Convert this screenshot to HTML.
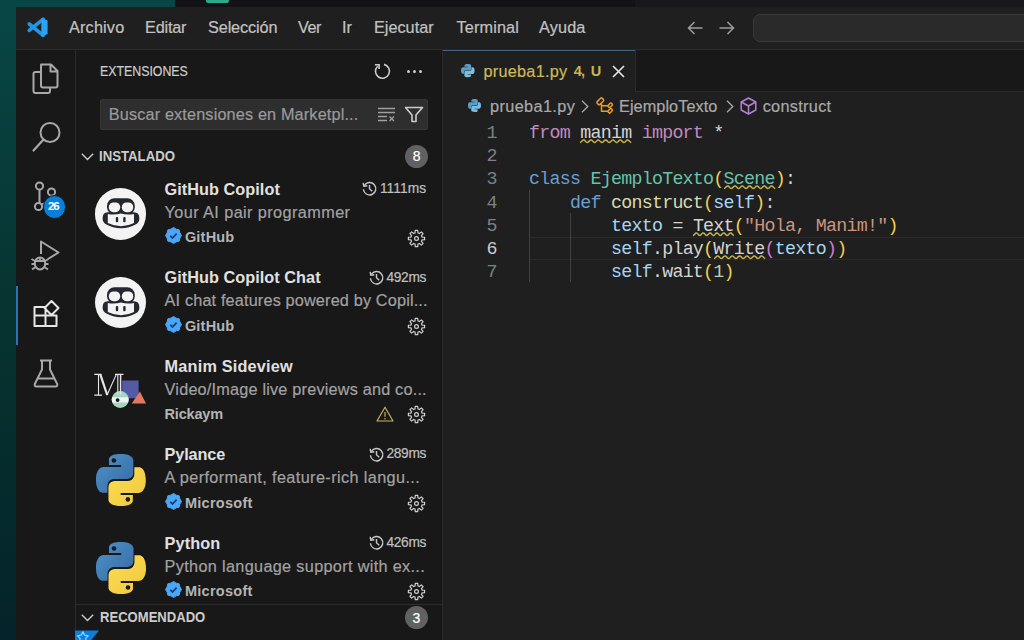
<!DOCTYPE html>
<html><head><meta charset="utf-8">
<style>
*{margin:0;padding:0;box-sizing:border-box}
html,body{width:1024px;height:640px;overflow:hidden;background:#063a3a}
body{position:relative;font-family:"Liberation Sans",sans-serif}
.abs{position:absolute}
.t{position:absolute;white-space:pre}
.t.r{-webkit-text-stroke:0.2px currentColor}
.cl{position:absolute;left:529.0px;white-space:pre;font-family:"Liberation Mono",monospace;font-size:18.300px;line-height:18.300px;letter-spacing:-0.730px}
.ln{position:absolute;left:486.5px;width:11px;text-align:right;white-space:pre;font-family:"Liberation Mono",monospace;font-size:18.300px;line-height:18.300px}
.sq{position:absolute}
svg{position:absolute;overflow:visible}
</style></head>
<body>
<!-- desktop background -->
<div class="abs" style="left:0;top:0;width:1024px;height:640px;background:linear-gradient(180deg,#084646 0%,#06332f 50%,#04232a 100%)"></div>
<!-- top strip (other window / panel) -->
<div class="abs" style="left:175px;top:0;width:460px;height:7px;background:#121217"></div>
<div class="abs" style="left:635px;top:0;width:389px;height:7px;background:#18181c"></div>
<div class="abs" style="left:205.5px;top:0;width:23.5px;height:2.5px;background:#2eaa8a;border-radius:0 0 2px 2px"></div>

<!-- window -->
<div class="abs" style="left:16px;top:7px;width:1008px;height:633px;background:#181818"></div>
<!-- title bar -->
<div class="abs" style="left:16px;top:7px;width:1008px;height:42px;background:#1f1f1f"></div>
<div class="abs" style="left:16px;top:49px;width:1008px;height:1px;background:#2b2b2b"></div>
<!-- vscode logo -->
<svg style="left:24px;top:14px" width="28" height="28" viewBox="0 0 28 28">
 <path d="M19.2 5.2 L5.2 16.4 M19.2 21.4 L5.2 10" stroke="#1f96e6" stroke-width="3.6" stroke-linecap="round"/>
 <path d="M17.3 3.9 L23.6 6.6 V20 L17.3 22.8 Z" fill="#2ba3f0"/>
</svg>
<!-- nav arrows -->
<svg style="left:687px;top:21px" width="16" height="14" viewBox="0 0 16 14"><path d="M15.5 7 H1.5 M7.5 1 L1.5 7 L7.5 13" fill="none" stroke="#9d9d9d" stroke-width="1.5"/></svg>
<svg style="left:719px;top:21px" width="16" height="14" viewBox="0 0 16 14"><path d="M0.5 7 H14.5 M8.5 1 L14.5 7 L8.5 13" fill="none" stroke="#9d9d9d" stroke-width="1.5"/></svg>
<!-- command center -->
<div class="abs" style="left:753px;top:13.5px;width:290px;height:28px;background:#2a2a2a;border:1px solid #3a3a3a;border-radius:7px"></div>

<!-- activity bar -->
<div class="abs" style="left:16px;top:50px;width:59px;height:590px;background:#181818"></div>
<div class="abs" style="left:75px;top:50px;width:1px;height:590px;background:#2b2b2b"></div>
<div class="abs" style="left:16px;top:286px;width:2px;height:59px;background:#2a74b8"></div>
<!-- files -->
<svg style="left:32px;top:63px" width="28" height="32" viewBox="0 0 28 32">
 <path d="M9 1.5 H19 L25.5 8 V22.5 Q25.5 24.5 23.5 24.5 H11 Q9 24.5 9 22.5 V3.5 Q9 1.5 11 1.5 Z M18.5 1.5 V8.5 H25.5" fill="none" stroke="#a8a8a8" stroke-width="2" stroke-linejoin="round"/>
 <path d="M9 9 H3.5 Q1.5 9 1.5 11 V28 Q1.5 30 3.5 30 H16 Q18 30 18 28 V24.5" fill="none" stroke="#a8a8a8" stroke-width="2" stroke-linejoin="round"/>
</svg>
<!-- search -->
<svg style="left:32px;top:121px" width="30" height="31" viewBox="0 0 30 31">
 <circle cx="18" cy="11.5" r="9.5" fill="none" stroke="#a8a8a8" stroke-width="2"/>
 <path d="M11.5 18.5 L1.5 29.5" stroke="#a8a8a8" stroke-width="2.2" stroke-linecap="round"/>
</svg>
<!-- source control -->
<svg style="left:32px;top:180px" width="28" height="34" viewBox="0 0 28 34">
 <circle cx="7.5" cy="6" r="3.6" fill="none" stroke="#a8a8a8" stroke-width="2"/>
 <circle cx="19.5" cy="12" r="3.6" fill="none" stroke="#a8a8a8" stroke-width="2"/>
 <circle cx="6.5" cy="26.5" r="3.6" fill="none" stroke="#a8a8a8" stroke-width="2"/>
 <path d="M7.5 9.6 V22.9 M19.5 15.6 Q19 21 10 24.5" fill="none" stroke="#a8a8a8" stroke-width="2"/>
</svg>
<div class="abs" style="left:42.5px;top:195.2px;width:23.6px;height:23.6px;border-radius:50%;background:#0a7fd8;border:1.6px solid #181818"></div>
<!-- run debug -->
<svg style="left:30px;top:240px" width="32" height="32" viewBox="0 0 32 32">
 <path d="M11 14 V1.5 L28.5 12.5 L18 19" fill="none" stroke="#a8a8a8" stroke-width="2" stroke-linejoin="round"/>
 <ellipse cx="10" cy="23.5" rx="5.2" ry="6" fill="none" stroke="#a8a8a8" stroke-width="2"/>
 <path d="M5 21 H15 M1.5 19 L5 21 M18.5 19 L15 21 M1.5 24 H4.8 M18.5 24 H15.2 M2 29.5 L5.5 27 M18 29.5 L14.5 27 M10 18 V21" fill="none" stroke="#a8a8a8" stroke-width="1.8"/>
</svg>
<!-- extensions -->
<svg style="left:33px;top:300px" width="28" height="28" viewBox="0 0 28 28">
 <path d="M1.5 7 H12.5 V26 H1.5 Z M1.5 15.5 H23.5 V26 H12.5 M18.5 1 L25.5 8 L18.5 15 L11.5 8 Z" fill="none" stroke="#e6e6e6" stroke-width="2" stroke-linejoin="round"/>
</svg>
<!-- flask -->
<svg style="left:33px;top:359px" width="26" height="29" viewBox="0 0 26 29">
 <path d="M7 1.5 H19 M9 1.5 V10.5 L1.8 25 Q1.2 27.5 3.5 27.5 H22.5 Q24.8 27.5 24.2 25 L17 10.5 V1.5 M5 19.5 H21" fill="none" stroke="#a8a8a8" stroke-width="2" stroke-linejoin="round"/>
</svg>

<!-- sidebar -->
<div class="abs" style="left:76px;top:50px;width:367px;height:590px;background:#181818"></div>
<div class="abs" style="left:442px;top:50px;width:1px;height:590px;background:#2b2b2b"></div>
<!-- refresh -->
<svg style="left:370px;top:60px" width="25" height="24" viewBox="0 0 25 24">
 <path d="M14 4.4 A7 7 0 1 1 7.6 6.2" fill="none" stroke="#cccccc" stroke-width="1.6"/>
 <path d="M4.9 4.7 H9.1 V9" fill="none" stroke="#cccccc" stroke-width="1.6"/>
</svg>
<!-- ellipsis -->
<div class="abs" style="left:406.5px;top:70px;width:3px;height:3px;border-radius:50%;background:#cccccc"></div>
<div class="abs" style="left:412.8px;top:70px;width:3px;height:3px;border-radius:50%;background:#cccccc"></div>
<div class="abs" style="left:418.8px;top:70px;width:3px;height:3px;border-radius:50%;background:#cccccc"></div>
<!-- search input -->
<div class="abs" style="left:99.5px;top:99px;width:328px;height:31px;background:#2e2e2e;border:1px solid #363636;border-radius:2px"></div>
<svg style="left:377px;top:107px" width="20" height="15" viewBox="0 0 20 15">
 <path d="M1 1.5 H18 M1 5.5 H18 M1 9.5 H10 M1 13.5 H10" stroke="#a0a0a0" stroke-width="1.3"/>
 <path d="M12.5 9.5 L17 14 M17 9.5 L12.5 14" stroke="#a0a0a0" stroke-width="1.3"/>
</svg>
<svg style="left:404px;top:106px" width="20" height="17" viewBox="0 0 20 17">
 <path d="M1.5 1.5 H18.5 L12 9 V15.5 H8 V9 Z" fill="none" stroke="#cccccc" stroke-width="1.6" stroke-linejoin="round"/>
</svg>
<!-- chevrons -->
<svg style="left:81px;top:153px" width="13" height="8" viewBox="0 0 13 8"><path d="M0.8 0.8 L6.5 6.5 L12.2 0.8" fill="none" stroke="#cccccc" stroke-width="1.4"/></svg>
<svg style="left:81px;top:614px" width="13" height="8" viewBox="0 0 13 8"><path d="M0.8 0.8 L6.5 6.5 L12.2 0.8" fill="none" stroke="#cccccc" stroke-width="1.4"/></svg>
<!-- count badges -->
<div class="abs" style="left:405px;top:145px;width:23px;height:23px;border-radius:50%;background:#616161"></div>
<div class="abs" style="left:405px;top:606px;width:23px;height:23px;border-radius:50%;background:#616161"></div>
<div class="abs" style="left:76px;top:604px;width:366px;height:1px;background:#2b2b2b"></div>

<!-- ext icons -->
<!-- copilot 1 -->

<div class="abs" style="left:94.75px;top:188.25px;width:51.5px;height:51.5px;border-radius:50%;background:#f3f3f3"></div>
<svg style="left:94.75px;top:188.25px" width="52" height="52" viewBox="0 0 52 52">
 <rect x="12" y="10.2" width="27.8" height="16.5" rx="7.5" fill="#24282e"/>
 <path d="M7.6 30.5 Q7.6 24.2 12.6 24.2 L39 24.2 Q44.4 24.2 44.4 30.5 Q44.4 34.5 40.5 36.5 Q34.5 40.2 26 40.2 Q17.5 40.2 11.5 36.5 Q7.6 34.5 7.6 30.5 Z" fill="#24282e"/>
 <rect x="13.8" y="14.4" width="11.4" height="9.8" rx="4.6" fill="#f3f3f3"/>
 <rect x="26.8" y="14.4" width="11.4" height="9.8" rx="4.6" fill="#f3f3f3"/>
 <path d="M12.8 26 Q19.3 27.4 25.9 25.6 Q32.5 27.4 39 26 L39 35 Q33 38.2 26 38.2 Q19 38.2 12.8 35 Z" fill="#f3f3f3"/>
 <rect x="20.8" y="28.9" width="2.4" height="5.3" rx="1" fill="#24282e"/>
 <rect x="28.2" y="28.9" width="2.4" height="5.3" rx="1" fill="#24282e"/>
</svg>
<div class="abs" style="left:94.75px;top:276.70px;width:51.5px;height:51.5px;border-radius:50%;background:#f3f3f3"></div>
<svg style="left:94.75px;top:276.70px" width="52" height="52" viewBox="0 0 52 52">
 <rect x="12" y="10.2" width="27.8" height="16.5" rx="7.5" fill="#24282e"/>
 <path d="M7.6 30.5 Q7.6 24.2 12.6 24.2 L39 24.2 Q44.4 24.2 44.4 30.5 Q44.4 34.5 40.5 36.5 Q34.5 40.2 26 40.2 Q17.5 40.2 11.5 36.5 Q7.6 34.5 7.6 30.5 Z" fill="#24282e"/>
 <rect x="13.8" y="14.4" width="11.4" height="9.8" rx="4.6" fill="#f3f3f3"/>
 <rect x="26.8" y="14.4" width="11.4" height="9.8" rx="4.6" fill="#f3f3f3"/>
 <path d="M12.8 26 Q19.3 27.4 25.9 25.6 Q32.5 27.4 39 26 L39 35 Q33 38.2 26 38.2 Q19 38.2 12.8 35 Z" fill="#f3f3f3"/>
 <rect x="20.8" y="28.9" width="2.4" height="5.3" rx="1" fill="#24282e"/>
 <rect x="28.2" y="28.9" width="2.4" height="5.3" rx="1" fill="#24282e"/>
</svg>
<svg style="left:90px;top:368px" width="60" height="40" viewBox="0 0 60 40">
 <rect x="32.2" y="12.5" width="16.4" height="17.7" fill="#5459a8"/>
 <path d="M49.9 23.6 L56 35.5 L41.7 35.5 Z" fill="#e07a5f"/>
 <circle cx="30.2" cy="31.5" r="8.5" fill="#a3d6bd"/>
 <path d="M22.02 29.2 H38.38 A8.5 8.5 0 0 1 38.11 34.6 H22.29 A8.5 8.5 0 0 1 22.02 29.2 Z" fill="#f2f2f2"/>
 <circle cx="27.6" cy="32.1" r="1.9" fill="#111"/>
 <g stroke="#e6e6e6" fill="none">
  <path d="M4.3 6.4 H11.5 M25 6.4 H33.5 M4.3 27.2 H12" stroke-width="1.2"/>
  <path d="M8.5 6.4 V27.2 M17 27.2 L26.3 6.4 M27.8 6.4 V26.5" stroke-width="1.1"/>
  <path d="M10.3 6.4 L17.2 27" stroke-width="2.2"/>
  <path d="M30.6 6.4 V26.5" stroke-width="1.5"/>
 </g>
</svg>
<svg style="left:95.8px;top:453.7px" width="49.8" height="51.9" viewBox="0 0 100 100" preserveAspectRatio="none"><defs><linearGradient id="pb1" x1="0" y1="0" x2="1" y2="1"><stop offset="0" stop-color="#4f93cc"/><stop offset="1" stop-color="#3569a0"/></linearGradient>
 <linearGradient id="py1" x1="0" y1="0" x2="1" y2="1"><stop offset="0" stop-color="#fbdd55"/><stop offset="1" stop-color="#f0c83c"/></linearGradient></defs>
 <path d="M49 0 C25 0 26 10.5 26 10.5 L26 21 L50.5 21 L50.5 25 L16 25 C16 25 0 23.5 0 49.5 C0 75.5 14 74.5 14 74.5 L23 74.5 L23 62 C23 62 22.5 48 37 48 L62 48 C62 48 75 48.5 75 35.5 L75 13 C75 13 77 0 49 0 Z" fill="url(#pb1)"/>
 <path d="M51 100 C75 100 74 89.5 74 89.5 L74 79 L49.5 79 L49.5 75 L84 75 C84 75 100 76.5 100 50.5 C100 24.5 86 25.5 86 25.5 L77 25.5 L77 38 C77 38 77.5 52 63 52 L38 52 C38 52 25 51.5 25 64.5 L25 87 C25 87 23 100 51 100 Z" fill="url(#py1)"/>
 <ellipse cx="36" cy="12.5" rx="4.6" ry="4.4" fill="#1a1a1a"/>
 <ellipse cx="64" cy="87.5" rx="4.6" ry="4.4" fill="#1a1a1a"/>
</svg>
<svg style="left:95.9px;top:541.7px" width="50" height="52" viewBox="0 0 100 100" preserveAspectRatio="none"><defs><linearGradient id="pb2" x1="0" y1="0" x2="1" y2="1"><stop offset="0" stop-color="#4f93cc"/><stop offset="1" stop-color="#3569a0"/></linearGradient>
 <linearGradient id="py2" x1="0" y1="0" x2="1" y2="1"><stop offset="0" stop-color="#fbdd55"/><stop offset="1" stop-color="#f0c83c"/></linearGradient></defs>
 <path d="M49 0 C25 0 26 10.5 26 10.5 L26 21 L50.5 21 L50.5 25 L16 25 C16 25 0 23.5 0 49.5 C0 75.5 14 74.5 14 74.5 L23 74.5 L23 62 C23 62 22.5 48 37 48 L62 48 C62 48 75 48.5 75 35.5 L75 13 C75 13 77 0 49 0 Z" fill="url(#pb2)"/>
 <path d="M51 100 C75 100 74 89.5 74 89.5 L74 79 L49.5 79 L49.5 75 L84 75 C84 75 100 76.5 100 50.5 C100 24.5 86 25.5 86 25.5 L77 25.5 L77 38 C77 38 77.5 52 63 52 L38 52 C38 52 25 51.5 25 64.5 L25 87 C25 87 23 100 51 100 Z" fill="url(#py2)"/>
 <ellipse cx="36" cy="12.5" rx="4.6" ry="4.4" fill="#1a1a1a"/>
 <ellipse cx="64" cy="87.5" rx="4.6" ry="4.4" fill="#1a1a1a"/>
</svg>
<svg style="left:165.4px;top:227.4px" width="17" height="17" viewBox="0 0 17 17">
 <polygon points="8.50,0.50 11.14,2.13 14.16,2.84 14.87,5.86 16.50,8.50 14.87,11.14 14.16,14.16 11.14,14.87 8.50,16.50 5.86,14.87 2.84,14.16 2.13,11.14 0.50,8.50 2.13,5.86 2.84,2.84 5.86,2.13" fill="#4aa6f6" stroke="#4aa6f6" stroke-width="1" stroke-linejoin="round"/>
 <path d="M5.3 8.9 L7.5 11 L11.6 6.6" fill="none" stroke="#0d3f78" stroke-width="1.8"/>
</svg>
<svg style="left:165.4px;top:315.85px" width="17" height="17" viewBox="0 0 17 17">
 <polygon points="8.50,0.50 11.14,2.13 14.16,2.84 14.87,5.86 16.50,8.50 14.87,11.14 14.16,14.16 11.14,14.87 8.50,16.50 5.86,14.87 2.84,14.16 2.13,11.14 0.50,8.50 2.13,5.86 2.84,2.84 5.86,2.13" fill="#4aa6f6" stroke="#4aa6f6" stroke-width="1" stroke-linejoin="round"/>
 <path d="M5.3 8.9 L7.5 11 L11.6 6.6" fill="none" stroke="#0d3f78" stroke-width="1.8"/>
</svg>
<svg style="left:165.4px;top:492.75px" width="17" height="17" viewBox="0 0 17 17">
 <polygon points="8.50,0.50 11.14,2.13 14.16,2.84 14.87,5.86 16.50,8.50 14.87,11.14 14.16,14.16 11.14,14.87 8.50,16.50 5.86,14.87 2.84,14.16 2.13,11.14 0.50,8.50 2.13,5.86 2.84,2.84 5.86,2.13" fill="#4aa6f6" stroke="#4aa6f6" stroke-width="1" stroke-linejoin="round"/>
 <path d="M5.3 8.9 L7.5 11 L11.6 6.6" fill="none" stroke="#0d3f78" stroke-width="1.8"/>
</svg>
<svg style="left:165.4px;top:581.2px" width="17" height="17" viewBox="0 0 17 17">
 <polygon points="8.50,0.50 11.14,2.13 14.16,2.84 14.87,5.86 16.50,8.50 14.87,11.14 14.16,14.16 11.14,14.87 8.50,16.50 5.86,14.87 2.84,14.16 2.13,11.14 0.50,8.50 2.13,5.86 2.84,2.84 5.86,2.13" fill="#4aa6f6" stroke="#4aa6f6" stroke-width="1" stroke-linejoin="round"/>
 <path d="M5.3 8.9 L7.5 11 L11.6 6.6" fill="none" stroke="#0d3f78" stroke-width="1.8"/>
</svg>
<svg style="left:408px;top:229.5px" width="17" height="17" viewBox="0 0 17 17">
 <path d="M14.01 7.03 L16.61 7.27 L16.61 9.73 L14.01 9.97 L13.43 11.36 L15.10 13.37 L13.37 15.10 L11.36 13.43 L9.97 14.01 L9.73 16.61 L7.27 16.61 L7.03 14.01 L5.64 13.43 L3.63 15.10 L1.90 13.37 L3.57 11.36 L2.99 9.97 L0.39 9.73 L0.39 7.27 L2.99 7.03 L3.57 5.64 L1.90 3.63 L3.63 1.90 L5.64 3.57 L7.03 2.99 L7.27 0.39 L9.73 0.39 L9.97 2.99 L11.36 3.57 L13.37 1.90 L15.10 3.63 L13.43 5.64 Z" fill="none" stroke="#d0d0d0" stroke-width="1.2" stroke-linejoin="round"/>
 <circle cx="8.5" cy="8.5" r="1.9" fill="none" stroke="#d0d0d0" stroke-width="1.2"/>
</svg>
<svg style="left:408px;top:317.95px" width="17" height="17" viewBox="0 0 17 17">
 <path d="M14.01 7.03 L16.61 7.27 L16.61 9.73 L14.01 9.97 L13.43 11.36 L15.10 13.37 L13.37 15.10 L11.36 13.43 L9.97 14.01 L9.73 16.61 L7.27 16.61 L7.03 14.01 L5.64 13.43 L3.63 15.10 L1.90 13.37 L3.57 11.36 L2.99 9.97 L0.39 9.73 L0.39 7.27 L2.99 7.03 L3.57 5.64 L1.90 3.63 L3.63 1.90 L5.64 3.57 L7.03 2.99 L7.27 0.39 L9.73 0.39 L9.97 2.99 L11.36 3.57 L13.37 1.90 L15.10 3.63 L13.43 5.64 Z" fill="none" stroke="#d0d0d0" stroke-width="1.2" stroke-linejoin="round"/>
 <circle cx="8.5" cy="8.5" r="1.9" fill="none" stroke="#d0d0d0" stroke-width="1.2"/>
</svg>
<svg style="left:408px;top:406.4px" width="17" height="17" viewBox="0 0 17 17">
 <path d="M14.01 7.03 L16.61 7.27 L16.61 9.73 L14.01 9.97 L13.43 11.36 L15.10 13.37 L13.37 15.10 L11.36 13.43 L9.97 14.01 L9.73 16.61 L7.27 16.61 L7.03 14.01 L5.64 13.43 L3.63 15.10 L1.90 13.37 L3.57 11.36 L2.99 9.97 L0.39 9.73 L0.39 7.27 L2.99 7.03 L3.57 5.64 L1.90 3.63 L3.63 1.90 L5.64 3.57 L7.03 2.99 L7.27 0.39 L9.73 0.39 L9.97 2.99 L11.36 3.57 L13.37 1.90 L15.10 3.63 L13.43 5.64 Z" fill="none" stroke="#d0d0d0" stroke-width="1.2" stroke-linejoin="round"/>
 <circle cx="8.5" cy="8.5" r="1.9" fill="none" stroke="#d0d0d0" stroke-width="1.2"/>
</svg>
<svg style="left:408px;top:494.85px" width="17" height="17" viewBox="0 0 17 17">
 <path d="M14.01 7.03 L16.61 7.27 L16.61 9.73 L14.01 9.97 L13.43 11.36 L15.10 13.37 L13.37 15.10 L11.36 13.43 L9.97 14.01 L9.73 16.61 L7.27 16.61 L7.03 14.01 L5.64 13.43 L3.63 15.10 L1.90 13.37 L3.57 11.36 L2.99 9.97 L0.39 9.73 L0.39 7.27 L2.99 7.03 L3.57 5.64 L1.90 3.63 L3.63 1.90 L5.64 3.57 L7.03 2.99 L7.27 0.39 L9.73 0.39 L9.97 2.99 L11.36 3.57 L13.37 1.90 L15.10 3.63 L13.43 5.64 Z" fill="none" stroke="#d0d0d0" stroke-width="1.2" stroke-linejoin="round"/>
 <circle cx="8.5" cy="8.5" r="1.9" fill="none" stroke="#d0d0d0" stroke-width="1.2"/>
</svg>
<svg style="left:408px;top:583.3px" width="17" height="17" viewBox="0 0 17 17">
 <path d="M14.01 7.03 L16.61 7.27 L16.61 9.73 L14.01 9.97 L13.43 11.36 L15.10 13.37 L13.37 15.10 L11.36 13.43 L9.97 14.01 L9.73 16.61 L7.27 16.61 L7.03 14.01 L5.64 13.43 L3.63 15.10 L1.90 13.37 L3.57 11.36 L2.99 9.97 L0.39 9.73 L0.39 7.27 L2.99 7.03 L3.57 5.64 L1.90 3.63 L3.63 1.90 L5.64 3.57 L7.03 2.99 L7.27 0.39 L9.73 0.39 L9.97 2.99 L11.36 3.57 L13.37 1.90 L15.10 3.63 L13.43 5.64 Z" fill="none" stroke="#d0d0d0" stroke-width="1.2" stroke-linejoin="round"/>
 <circle cx="8.5" cy="8.5" r="1.9" fill="none" stroke="#d0d0d0" stroke-width="1.2"/>
</svg>
<svg style="left:376px;top:405.8px" width="18" height="16" viewBox="0 0 18 16">
 <path d="M9 1.2 L17 15 L1 15 Z" fill="none" stroke="#c4b25a" stroke-width="1.2" stroke-linejoin="round"/>
 <path d="M9 6 V10.8 M9 12 V13.4" stroke="#c4b25a" stroke-width="1.2"/>
</svg>
<svg style="left:361.7px;top:181.4px" width="15" height="15" viewBox="0 0 15 15">
 <path d="M2.3 4.5 A6.2 6.2 0 1 1 1.4 8.2" fill="none" stroke="#c8c8c8" stroke-width="1.4"/>
 <path d="M1.2 1.8 L1.8 5.3 L5.3 4.7" fill="none" stroke="#c8c8c8" stroke-width="1.4"/>
 <path d="M7.5 4 V7.8 L10.2 10.3" fill="none" stroke="#c8c8c8" stroke-width="1.4"/>
</svg>
<svg style="left:369.2px;top:269.85px" width="15" height="15" viewBox="0 0 15 15">
 <path d="M2.3 4.5 A6.2 6.2 0 1 1 1.4 8.2" fill="none" stroke="#c8c8c8" stroke-width="1.4"/>
 <path d="M1.2 1.8 L1.8 5.3 L5.3 4.7" fill="none" stroke="#c8c8c8" stroke-width="1.4"/>
 <path d="M7.5 4 V7.8 L10.2 10.3" fill="none" stroke="#c8c8c8" stroke-width="1.4"/>
</svg>
<svg style="left:369.2px;top:446.75px" width="15" height="15" viewBox="0 0 15 15">
 <path d="M2.3 4.5 A6.2 6.2 0 1 1 1.4 8.2" fill="none" stroke="#c8c8c8" stroke-width="1.4"/>
 <path d="M1.2 1.8 L1.8 5.3 L5.3 4.7" fill="none" stroke="#c8c8c8" stroke-width="1.4"/>
 <path d="M7.5 4 V7.8 L10.2 10.3" fill="none" stroke="#c8c8c8" stroke-width="1.4"/>
</svg>
<svg style="left:369.2px;top:535.2px" width="15" height="15" viewBox="0 0 15 15">
 <path d="M2.3 4.5 A6.2 6.2 0 1 1 1.4 8.2" fill="none" stroke="#c8c8c8" stroke-width="1.4"/>
 <path d="M1.2 1.8 L1.8 5.3 L5.3 4.7" fill="none" stroke="#c8c8c8" stroke-width="1.4"/>
 <path d="M7.5 4 V7.8 L10.2 10.3" fill="none" stroke="#c8c8c8" stroke-width="1.4"/>
</svg>

<!-- editor -->
<div class="abs" style="left:443px;top:50px;width:581px;height:590px;background:#1f1f1f"></div>
<!-- tab bar -->
<div class="abs" style="left:443px;top:50px;width:581px;height:42px;background:#181818"></div>
<div class="abs" style="left:635px;top:91px;width:389px;height:1px;background:#2b2b2b"></div>
<div class="abs" style="left:443px;top:50px;width:192px;height:42px;background:#1f1f1f"></div>
<div class="abs" style="left:443px;top:49px;width:192px;height:1px;background:#0f2c45"></div>
<div class="abs" style="left:443px;top:50px;width:192px;height:1px;background:#466481"></div>
<div class="abs" style="left:635px;top:50px;width:1px;height:42px;background:#2b2b2b"></div>
<svg style="left:612px;top:65px" width="13" height="13" viewBox="0 0 13 13"><path d="M1 1 L12 12 M12 1 L1 12" stroke="#e8e8e8" stroke-width="1.6"/></svg>

<!-- current line highlight -->
<div class="abs" style="left:529px;top:236.5px;width:495px;height:23px;border-top:1px solid #2a2a2a;border-bottom:1px solid #2a2a2a"></div>
<!-- indent guides -->
<div class="abs" style="left:529px;top:190px;width:1px;height:92px;background:#404040"></div>
<div class="abs" style="left:570px;top:213px;width:1px;height:69px;background:#404040"></div>

<div class="t r" style="left:69.00px;top:19.24px;font-size:16.25px;line-height:16.25px;color:#c2c2c2;font-weight:400;font-family:'Liberation Sans', sans-serif;letter-spacing:0.167px;">Archivo</div>
<div class="t r" style="left:145.00px;top:19.24px;font-size:16.25px;line-height:16.25px;color:#c2c2c2;font-weight:400;font-family:'Liberation Sans', sans-serif;letter-spacing:-0.200px;">Editar</div>
<div class="t r" style="left:208.00px;top:19.24px;font-size:16.25px;line-height:16.25px;color:#c2c2c2;font-weight:400;font-family:'Liberation Sans', sans-serif;letter-spacing:-0.125px;">Selección</div>
<div class="t r" style="left:298.00px;top:19.24px;font-size:16.25px;line-height:16.25px;color:#c2c2c2;font-weight:400;font-family:'Liberation Sans', sans-serif;letter-spacing:-0.500px;">Ver</div>
<div class="t r" style="left:342.00px;top:19.24px;font-size:16.25px;line-height:16.25px;color:#c2c2c2;font-weight:400;font-family:'Liberation Sans', sans-serif;letter-spacing:0.000px;">Ir</div>
<div class="t r" style="left:374.00px;top:19.24px;font-size:16.25px;line-height:16.25px;color:#c2c2c2;font-weight:400;font-family:'Liberation Sans', sans-serif;letter-spacing:0.000px;">Ejecutar</div>
<div class="t r" style="left:456.50px;top:19.24px;font-size:16.25px;line-height:16.25px;color:#c2c2c2;font-weight:400;font-family:'Liberation Sans', sans-serif;letter-spacing:0.143px;">Terminal</div>
<div class="t r" style="left:539.00px;top:19.24px;font-size:16.25px;line-height:16.25px;color:#c2c2c2;font-weight:400;font-family:'Liberation Sans', sans-serif;letter-spacing:0.150px;">Ayuda</div>
<div class="t r" style="left:99.70px;top:65.36px;font-size:13.75px;line-height:13.75px;color:#cccccc;font-weight:400;font-family:'Liberation Sans', sans-serif;letter-spacing:0.000px;transform:scaleX(0.8980);transform-origin:0px 0;">EXTENSIONES</div>
<div class="t r" style="left:108.75px;top:106.24px;font-size:16.25px;line-height:16.25px;color:#9a9a9a;font-weight:400;font-family:'Liberation Sans', sans-serif;letter-spacing:0.148px;">Buscar extensiones en Marketpl...</div>
<div class="t" style="left:99.40px;top:150.36px;font-size:13.75px;line-height:13.75px;color:#cccccc;font-weight:700;font-family:'Liberation Sans', sans-serif;letter-spacing:0.000px;transform:scaleX(0.9600);transform-origin:0px 0;">INSTALADO</div>
<div class="t" style="left:99.70px;top:611.36px;font-size:13.75px;line-height:13.75px;color:#cccccc;font-weight:700;font-family:'Liberation Sans', sans-serif;letter-spacing:0.000px;transform:scaleX(0.9505);transform-origin:0px 0;">RECOMENDADO</div>
<div class="t" style="left:164.60px;top:181.04px;font-size:16.25px;line-height:16.25px;color:#e0e0e0;font-weight:700;font-family:'Liberation Sans', sans-serif;letter-spacing:0.046px;">GitHub Copilot</div>
<div class="t r" style="left:164.60px;top:203.79px;font-size:16.25px;line-height:16.25px;color:#a2a2a2;font-weight:400;font-family:'Liberation Sans', sans-serif;letter-spacing:0.409px;">Your AI pair programmer</div>
<div class="t" style="left:184.90px;top:230.38px;font-size:14.5px;line-height:14.5px;color:#b4b4b4;font-weight:700;font-family:'Liberation Sans', sans-serif;letter-spacing:0.200px;">GitHub</div>
<div class="t r" style="left:379.90px;top:182.06px;font-size:13.75px;line-height:13.75px;color:#c0c0c0;font-weight:400;font-family:'Liberation Sans', sans-serif;letter-spacing:0.060px;">1111ms</div>
<div class="t" style="left:164.60px;top:269.49px;font-size:16.25px;line-height:16.25px;color:#e0e0e0;font-weight:700;font-family:'Liberation Sans', sans-serif;letter-spacing:0.039px;">GitHub Copilot Chat</div>
<div class="t r" style="left:164.60px;top:292.24px;font-size:16.25px;line-height:16.25px;color:#a2a2a2;font-weight:400;font-family:'Liberation Sans', sans-serif;letter-spacing:0.157px;">AI chat features powered by Copil...</div>
<div class="t" style="left:184.90px;top:318.83px;font-size:14.5px;line-height:14.5px;color:#b4b4b4;font-weight:700;font-family:'Liberation Sans', sans-serif;letter-spacing:0.200px;">GitHub</div>
<div class="t r" style="left:386.40px;top:270.51px;font-size:13.75px;line-height:13.75px;color:#c0c0c0;font-weight:400;font-family:'Liberation Sans', sans-serif;letter-spacing:-0.300px;">492ms</div>
<div class="t" style="left:164.60px;top:357.94px;font-size:16.25px;line-height:16.25px;color:#e0e0e0;font-weight:700;font-family:'Liberation Sans', sans-serif;letter-spacing:0.192px;">Manim Sideview</div>
<div class="t r" style="left:164.60px;top:380.69px;font-size:16.25px;line-height:16.25px;color:#a2a2a2;font-weight:400;font-family:'Liberation Sans', sans-serif;letter-spacing:0.197px;">Video/Image live previews and co...</div>
<div class="t" style="left:164.60px;top:407.28px;font-size:14.5px;line-height:14.5px;color:#b4b4b4;font-weight:700;font-family:'Liberation Sans', sans-serif;letter-spacing:-0.200px;">Rickaym</div>
<div class="t" style="left:164.60px;top:446.39px;font-size:16.25px;line-height:16.25px;color:#e0e0e0;font-weight:700;font-family:'Liberation Sans', sans-serif;letter-spacing:-0.133px;">Pylance</div>
<div class="t r" style="left:164.60px;top:469.14px;font-size:16.25px;line-height:16.25px;color:#a2a2a2;font-weight:400;font-family:'Liberation Sans', sans-serif;letter-spacing:0.385px;">A performant, feature-rich langu...</div>
<div class="t" style="left:184.90px;top:495.73px;font-size:14.5px;line-height:14.5px;color:#b4b4b4;font-weight:700;font-family:'Liberation Sans', sans-serif;letter-spacing:0.275px;">Microsoft</div>
<div class="t r" style="left:386.40px;top:447.41px;font-size:13.75px;line-height:13.75px;color:#c0c0c0;font-weight:400;font-family:'Liberation Sans', sans-serif;letter-spacing:-0.300px;">289ms</div>
<div class="t" style="left:164.60px;top:534.84px;font-size:16.25px;line-height:16.25px;color:#e0e0e0;font-weight:700;font-family:'Liberation Sans', sans-serif;letter-spacing:0.100px;">Python</div>
<div class="t r" style="left:164.60px;top:557.59px;font-size:16.25px;line-height:16.25px;color:#a2a2a2;font-weight:400;font-family:'Liberation Sans', sans-serif;letter-spacing:0.327px;">Python language support with ex...</div>
<div class="t" style="left:184.90px;top:584.18px;font-size:14.5px;line-height:14.5px;color:#b4b4b4;font-weight:700;font-family:'Liberation Sans', sans-serif;letter-spacing:0.275px;">Microsoft</div>
<div class="t r" style="left:386.40px;top:535.86px;font-size:13.75px;line-height:13.75px;color:#c0c0c0;font-weight:400;font-family:'Liberation Sans', sans-serif;letter-spacing:-0.300px;">426ms</div>
<div class="t r" style="left:483.40px;top:62.74px;font-size:16.25px;line-height:16.25px;color:#cdb85a;font-weight:400;font-family:'Liberation Sans', sans-serif;letter-spacing:0.278px;">prueba1.py</div>
<div class="t" style="left:573.80px;top:63.73px;font-size:14.5px;line-height:14.5px;color:#cdb54e;font-weight:700;font-family:'Liberation Sans', sans-serif;letter-spacing:-0.800px;">4,</div>
<div class="t" style="left:590.80px;top:63.73px;font-size:14.5px;line-height:14.5px;color:#cdb54e;font-weight:700;font-family:'Liberation Sans', sans-serif;letter-spacing:0.000px;">U</div>
<div class="t r" style="left:490.00px;top:97.74px;font-size:16.25px;line-height:16.25px;color:#a9a9a9;font-weight:400;font-family:'Liberation Sans', sans-serif;letter-spacing:0.389px;">prueba1.py</div>
<div class="t r" style="left:619.00px;top:97.74px;font-size:16.25px;line-height:16.25px;color:#a9a9a9;font-weight:400;font-family:'Liberation Sans', sans-serif;letter-spacing:0.073px;">EjemploTexto</div>
<div class="t r" style="left:762.70px;top:97.74px;font-size:16.25px;line-height:16.25px;color:#a9a9a9;font-weight:400;font-family:'Liberation Sans', sans-serif;letter-spacing:0.312px;">construct</div>
<div class="t" style="left:48.00px;top:200.77px;font-size:11.5px;line-height:11.5px;color:#ffffff;font-weight:700;font-family:'Liberation Sans', sans-serif;letter-spacing:-1.100px;">26</div>
<div class="t r" style="left:412.80px;top:149.05px;font-size:14px;line-height:14px;color:#ffffff;font-weight:400;font-family:'Liberation Sans', sans-serif;letter-spacing:0.000px;">8</div>
<div class="t r" style="left:412.50px;top:610.65px;font-size:14px;line-height:14px;color:#ffffff;font-weight:400;font-family:'Liberation Sans', sans-serif;letter-spacing:0.000px;">3</div>
<div class="ln" style="top:123.98px;color:#7d8186">1</div>
<div class="ln" style="top:147.18px;color:#7d8186">2</div>
<div class="ln" style="top:170.38px;color:#7d8186">3</div>
<div class="ln" style="top:193.58px;color:#7d8186">4</div>
<div class="ln" style="top:216.78px;color:#7d8186">5</div>
<div class="ln" style="top:239.98px;color:#cccccc">6</div>
<div class="ln" style="top:263.18px;color:#7d8186">7</div>
<div class="cl" style="top:123.98px"><span style="color:#c28bbe">from </span><span style="color:#d4d4d4">manim</span><span style="color:#d4d4d4"> </span><span style="color:#c28bbe">import</span><span style="color:#d4d4d4"> *</span></div>
<div class="cl" style="top:147.18px"></div>
<div class="cl" style="top:170.38px"><span style="color:#6a9fd2">class </span><span style="color:#68c2aa">EjemploTexto</span><span style="color:#f0d050">(</span><span style="color:#68c2aa">Scene</span><span style="color:#f0d050">)</span><span style="color:#d4d4d4">:</span></div>
<div class="cl" style="top:193.58px"><span style="color:#d4d4d4">    </span><span style="color:#6a9fd2">def </span><span style="color:#dadab0">construct</span><span style="color:#f0d050">(</span><span style="color:#a6d6f4">self</span><span style="color:#f0d050">)</span><span style="color:#d4d4d4">:</span></div>
<div class="cl" style="top:216.78px"><span style="color:#d4d4d4">        </span><span style="color:#a6d6f4">texto</span><span style="color:#d4d4d4"> = </span><span style="color:#d4d4d4">Text</span><span style="color:#f0d050">(</span><span style="color:#cc957e">"Hola, Manim!"</span><span style="color:#f0d050">)</span></div>
<div class="cl" style="top:239.98px"><span style="color:#d4d4d4">        </span><span style="color:#a6d6f4">self</span><span style="color:#d4d4d4">.play</span><span style="color:#f0d050">(</span><span style="color:#d4d4d4">Write</span><span style="color:#d07ccc">(</span><span style="color:#a6d6f4">texto</span><span style="color:#d07ccc">)</span><span style="color:#f0d050">)</span></div>
<div class="cl" style="top:263.18px"><span style="color:#d4d4d4">        </span><span style="color:#a6d6f4">self</span><span style="color:#d4d4d4">.wait</span><span style="color:#f0d050">(</span><span style="color:#bcd0b0">1</span><span style="color:#f0d050">)</span></div>
<svg class="sq" style="left:580.2px;top:139.0px" width="51.2" height="5"><path d="M0.00 3.45 L0.50 3.34 L1.00 3.02 L1.49 2.56 L1.99 2.03 L2.49 1.53 L2.99 1.15 L3.48 0.96 L3.98 1.00 L4.48 1.25 L4.98 1.67 L5.47 2.18 L5.97 2.70 L6.47 3.13 L6.97 3.39 L7.46 3.44 L7.96 3.27 L8.46 2.90 L8.96 2.41 L9.45 1.88 L9.95 1.41 L10.45 1.08 L10.95 0.95 L11.44 1.05 L11.94 1.35 L12.44 1.81 L12.94 2.33 L13.43 2.84 L13.93 3.22 L14.43 3.43 L14.93 3.41 L15.42 3.18 L15.92 2.77 L16.42 2.26 L16.92 1.73 L17.42 1.30 L17.91 1.02 L18.41 0.96 L18.91 1.11 L19.41 1.47 L19.90 1.95 L20.40 2.48 L20.90 2.96 L21.40 3.30 L21.89 3.45 L22.39 3.37 L22.89 3.08 L23.39 2.63 L23.88 2.10 L24.38 1.60 L24.88 1.20 L25.38 0.98 L25.87 0.98 L26.37 1.20 L26.87 1.60 L27.37 2.10 L27.86 2.63 L28.36 3.08 L28.86 3.37 L29.36 3.45 L29.85 3.30 L30.35 2.96 L30.85 2.48 L31.35 1.95 L31.84 1.47 L32.34 1.11 L32.84 0.96 L33.34 1.02 L33.83 1.30 L34.33 1.73 L34.83 2.26 L35.33 2.77 L35.83 3.18 L36.32 3.41 L36.82 3.43 L37.32 3.22 L37.82 2.84 L38.31 2.33 L38.81 1.81 L39.31 1.35 L39.81 1.05 L40.30 0.95 L40.80 1.08 L41.30 1.41 L41.80 1.88 L42.29 2.41 L42.79 2.90 L43.29 3.27 L43.79 3.44 L44.28 3.39 L44.78 3.13 L45.28 2.70 L45.78 2.18 L46.27 1.67 L46.77 1.25 L47.27 1.00 L47.77 0.96 L48.26 1.15 L48.76 1.53 L49.26 2.03 L49.76 2.56 L50.25 3.02 L50.75 3.34 L51.25 3.45" fill="none" stroke="#c4b04c" stroke-width="1.5"/></svg>
<svg class="sq" style="left:723.8px;top:185.4px" width="51.2" height="5"><path d="M0.00 3.45 L0.50 3.34 L1.00 3.02 L1.49 2.56 L1.99 2.03 L2.49 1.53 L2.99 1.15 L3.48 0.96 L3.98 1.00 L4.48 1.25 L4.98 1.67 L5.47 2.18 L5.97 2.70 L6.47 3.13 L6.97 3.39 L7.46 3.44 L7.96 3.27 L8.46 2.90 L8.96 2.41 L9.45 1.88 L9.95 1.41 L10.45 1.08 L10.95 0.95 L11.44 1.05 L11.94 1.35 L12.44 1.81 L12.94 2.33 L13.43 2.84 L13.93 3.22 L14.43 3.43 L14.93 3.41 L15.42 3.18 L15.92 2.77 L16.42 2.26 L16.92 1.73 L17.42 1.30 L17.91 1.02 L18.41 0.96 L18.91 1.11 L19.41 1.47 L19.90 1.95 L20.40 2.48 L20.90 2.96 L21.40 3.30 L21.89 3.45 L22.39 3.37 L22.89 3.08 L23.39 2.63 L23.88 2.10 L24.38 1.60 L24.88 1.20 L25.38 0.98 L25.87 0.98 L26.37 1.20 L26.87 1.60 L27.37 2.10 L27.86 2.63 L28.36 3.08 L28.86 3.37 L29.36 3.45 L29.85 3.30 L30.35 2.96 L30.85 2.48 L31.35 1.95 L31.84 1.47 L32.34 1.11 L32.84 0.96 L33.34 1.02 L33.83 1.30 L34.33 1.73 L34.83 2.26 L35.33 2.77 L35.83 3.18 L36.32 3.41 L36.82 3.43 L37.32 3.22 L37.82 2.84 L38.31 2.33 L38.81 1.81 L39.31 1.35 L39.81 1.05 L40.30 0.95 L40.80 1.08 L41.30 1.41 L41.80 1.88 L42.29 2.41 L42.79 2.90 L43.29 3.27 L43.79 3.44 L44.28 3.39 L44.78 3.13 L45.28 2.70 L45.78 2.18 L46.27 1.67 L46.77 1.25 L47.27 1.00 L47.77 0.96 L48.26 1.15 L48.76 1.53 L49.26 2.03 L49.76 2.56 L50.25 3.02 L50.75 3.34 L51.25 3.45" fill="none" stroke="#c4b04c" stroke-width="1.5"/></svg>
<svg class="sq" style="left:693.0px;top:231.8px" width="41.0" height="5"><path d="M0.00 3.45 L0.49 3.32 L0.99 2.97 L1.48 2.46 L1.98 1.90 L2.47 1.39 L2.96 1.06 L3.46 0.95 L3.95 1.10 L4.45 1.47 L4.94 1.99 L5.43 2.55 L5.93 3.04 L6.42 3.36 L6.92 3.45 L7.41 3.28 L7.90 2.89 L8.40 2.37 L8.89 1.80 L9.39 1.32 L9.88 1.02 L10.37 0.96 L10.87 1.15 L11.36 1.55 L11.86 2.08 L12.35 2.64 L12.84 3.11 L13.34 3.39 L13.83 3.44 L14.33 3.23 L14.82 2.81 L15.31 2.27 L15.81 1.72 L16.30 1.26 L16.80 0.99 L17.29 0.97 L17.78 1.20 L18.28 1.63 L18.77 2.18 L19.27 2.73 L19.76 3.17 L20.25 3.42 L20.75 3.42 L21.24 3.17 L21.73 2.73 L22.23 2.18 L22.72 1.63 L23.22 1.20 L23.71 0.97 L24.20 0.99 L24.70 1.26 L25.19 1.72 L25.69 2.27 L26.18 2.81 L26.67 3.23 L27.17 3.44 L27.66 3.39 L28.16 3.11 L28.65 2.64 L29.14 2.08 L29.64 1.55 L30.13 1.15 L30.63 0.96 L31.12 1.02 L31.61 1.32 L32.11 1.80 L32.60 2.37 L33.10 2.89 L33.59 3.28 L34.08 3.45 L34.58 3.36 L35.07 3.04 L35.57 2.55 L36.06 1.99 L36.55 1.47 L37.05 1.10 L37.54 0.95 L38.04 1.06 L38.53 1.39 L39.02 1.90 L39.52 2.46 L40.01 2.97 L40.51 3.32 L41.00 3.45" fill="none" stroke="#c4b04c" stroke-width="1.5"/></svg>
<svg class="sq" style="left:713.5px;top:255.0px" width="51.2" height="5"><path d="M0.00 3.45 L0.50 3.34 L1.00 3.02 L1.49 2.56 L1.99 2.03 L2.49 1.53 L2.99 1.15 L3.48 0.96 L3.98 1.00 L4.48 1.25 L4.98 1.67 L5.47 2.18 L5.97 2.70 L6.47 3.13 L6.97 3.39 L7.46 3.44 L7.96 3.27 L8.46 2.90 L8.96 2.41 L9.45 1.88 L9.95 1.41 L10.45 1.08 L10.95 0.95 L11.44 1.05 L11.94 1.35 L12.44 1.81 L12.94 2.33 L13.43 2.84 L13.93 3.22 L14.43 3.43 L14.93 3.41 L15.42 3.18 L15.92 2.77 L16.42 2.26 L16.92 1.73 L17.42 1.30 L17.91 1.02 L18.41 0.96 L18.91 1.11 L19.41 1.47 L19.90 1.95 L20.40 2.48 L20.90 2.96 L21.40 3.30 L21.89 3.45 L22.39 3.37 L22.89 3.08 L23.39 2.63 L23.88 2.10 L24.38 1.60 L24.88 1.20 L25.38 0.98 L25.87 0.98 L26.37 1.20 L26.87 1.60 L27.37 2.10 L27.86 2.63 L28.36 3.08 L28.86 3.37 L29.36 3.45 L29.85 3.30 L30.35 2.96 L30.85 2.48 L31.35 1.95 L31.84 1.47 L32.34 1.11 L32.84 0.96 L33.34 1.02 L33.83 1.30 L34.33 1.73 L34.83 2.26 L35.33 2.77 L35.83 3.18 L36.32 3.41 L36.82 3.43 L37.32 3.22 L37.82 2.84 L38.31 2.33 L38.81 1.81 L39.31 1.35 L39.81 1.05 L40.30 0.95 L40.80 1.08 L41.30 1.41 L41.80 1.88 L42.29 2.41 L42.79 2.90 L43.29 3.27 L43.79 3.44 L44.28 3.39 L44.78 3.13 L45.28 2.70 L45.78 2.18 L46.27 1.67 L46.77 1.25 L47.27 1.00 L47.77 0.96 L48.26 1.15 L48.76 1.53 L49.26 2.03 L49.76 2.56 L50.25 3.02 L50.75 3.34 L51.25 3.45" fill="none" stroke="#c4b04c" stroke-width="1.5"/></svg>
<svg style="left:460.5px;top:64px" width="13.6" height="13.2" viewBox="0 0 100 100" preserveAspectRatio="none">
 <path d="M49 0 C25 0 26 10.5 26 10.5 L26 21 L50.5 21 L50.5 25 L16 25 C16 25 0 23.5 0 49.5 C0 75.5 14 74.5 14 74.5 L23 74.5 L23 62 C23 62 22.5 48 37 48 L62 48 C62 48 75 48.5 75 35.5 L75 13 C75 13 77 0 49 0 Z" fill="#5a9dc8"/>
 <path d="M51 100 C75 100 74 89.5 74 89.5 L74 79 L49.5 79 L49.5 75 L84 75 C84 75 100 76.5 100 50.5 C100 24.5 86 25.5 86 25.5 L77 25.5 L77 38 C77 38 77.5 52 63 52 L38 52 C38 52 25 51.5 25 64.5 L25 87 C25 87 23 100 51 100 Z" fill="#7cbde2"/>
 <ellipse cx="36" cy="12.5" rx="4.6" ry="4.4" fill="none"/>
 <ellipse cx="64" cy="87.5" rx="4.6" ry="4.4" fill="none"/>
</svg>
<svg style="left:468px;top:99px" width="13" height="13" viewBox="0 0 100 100" preserveAspectRatio="none">
 <path d="M49 0 C25 0 26 10.5 26 10.5 L26 21 L50.5 21 L50.5 25 L16 25 C16 25 0 23.5 0 49.5 C0 75.5 14 74.5 14 74.5 L23 74.5 L23 62 C23 62 22.5 48 37 48 L62 48 C62 48 75 48.5 75 35.5 L75 13 C75 13 77 0 49 0 Z" fill="#5a9dc8"/>
 <path d="M51 100 C75 100 74 89.5 74 89.5 L74 79 L49.5 79 L49.5 75 L84 75 C84 75 100 76.5 100 50.5 C100 24.5 86 25.5 86 25.5 L77 25.5 L77 38 C77 38 77.5 52 63 52 L38 52 C38 52 25 51.5 25 64.5 L25 87 C25 87 23 100 51 100 Z" fill="#7cbde2"/>
 <ellipse cx="36" cy="12.5" rx="4.6" ry="4.4" fill="none"/>
 <ellipse cx="64" cy="87.5" rx="4.6" ry="4.4" fill="none"/>
</svg>
<svg style="left:596px;top:97px" width="18" height="18" viewBox="0 0 18 18">
 <g fill="none" stroke="#ee9d28" stroke-width="1.5" stroke-linejoin="round">
  <path d="M1.2 4.6 L4.6 1.2 Q5.4 0.5 6.2 1.2 L7.4 2.4 Q8.1 3.2 7.4 4 L4 7.4 Q3.2 8.1 2.4 7.4 L1.2 6.2 Q0.5 5.4 1.2 4.6 Z"/>
  <path d="M12.2 8.2 L14.2 6.2 Q14.8 5.6 15.4 6.2 L16.2 7 Q16.8 7.6 16.2 8.2 L14.2 10.2 Q13.6 10.8 13 10.2 L12.2 9.4 Q11.6 8.8 12.2 8.2 Z"/>
  <path d="M12.2 13.8 L14.2 11.8 Q14.8 11.2 15.4 11.8 L16.2 12.6 Q16.8 13.2 16.2 13.8 L14.2 15.8 Q13.6 16.4 13 15.8 L12.2 15 Q11.6 14.4 12.2 13.8 Z"/>
  <path d="M5.5 7 V14.2 H12 M5.5 8.7 H12.6"/>
 </g>
</svg>
<svg style="left:740px;top:97px" width="17" height="18" viewBox="0 0 17 18">
 <g fill="none" stroke="#b180d7" stroke-width="1.5" stroke-linejoin="round">
  <path d="M8.5 1 L15.8 5 V13 L8.5 17 L1.2 13 V5 Z"/>
  <path d="M1.2 5 L8.5 9 L15.8 5 M8.5 9 V17"/>
 </g>
</svg>
<svg style="left:581.2px;top:99.5px" width="8" height="13" viewBox="0 0 8 13"><path d="M1 0.8 L6.8 6.5 L1 12.2" fill="none" stroke="#a9a9a9" stroke-width="1.3"/></svg>
<svg style="left:726px;top:99.5px" width="8" height="13" viewBox="0 0 8 13"><path d="M1 0.8 L6.8 6.5 L1 12.2" fill="none" stroke="#a9a9a9" stroke-width="1.3"/></svg>
<svg style="left:0px;top:0px" width="1024" height="640" viewBox="0 0 1024 640">
 <path d="M75 630.5 H99 L90.5 641 H75 Z" fill="#0a7fdc"/>
 <polygon points="82.90,631.90 84.60,635.15 88.23,635.77 85.66,638.40 86.19,642.03 82.90,640.40 79.61,642.03 80.14,638.40 77.57,635.77 81.20,635.15" fill="none" stroke="#8ccfff" stroke-width="1.3" stroke-linejoin="round"/>
</svg>
</body></html>
